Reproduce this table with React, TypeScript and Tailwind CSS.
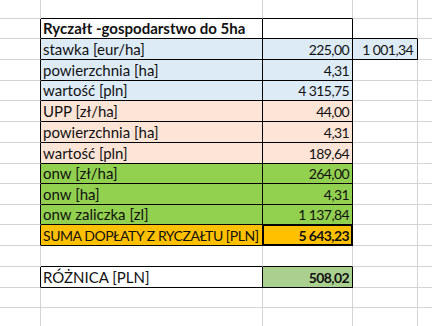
import React from 'react';

type Cell = {
    text?: string;
    cls: string;
    num?: boolean;
    bold?: boolean;
};

const G = 'border-r border-b border-r-[#d4d4d4] border-b-[#d4d4d4]';
const E = 'border-b border-b-[#d4d4d4]';
const grid = (r: 'g' | 'k', b: 'g' | 'k') =>
    `border-r border-b ${r === 'k' ? 'border-r-black' : 'border-r-[#d4d4d4]'} ${b === 'k' ? 'border-b-black' : 'border-b-[#d4d4d4]'}`;

const blue = 'bg-[#ddebf7]';
const peach = 'bg-[#fce4d6]';
const green = 'bg-[#92d050]';
const orange = 'bg-[#ffc000]';

const dataRow = (label: string, value: string, bg: string, d?: Cell): Cell[] => [
    { cls: grid('k', 'g') },
    { text: label, cls: `${grid('k', 'k')} ${bg} pl-[2px]` },
    { text: value, cls: `${grid('k', 'k')} ${bg} pr-[3px]`, num: true },
    d ?? { cls: G },
    { cls: E },
];

const rows: { h: string; cells: Cell[] }[] = [
    { h: 'h-[19px]', cells: [{ cls: G }, { cls: grid('g', 'k') }, { cls: grid('g', 'k') }, { cls: G }, { cls: E }] },
    {
        h: 'h-[20px]',
        cells: [
            { cls: grid('k', 'g') },
            { text: 'Ryczałt -gospodarstwo do 5ha', cls: `${grid('k', 'k')} pl-[2px]`, bold: true },
            { cls: grid('k', 'k') },
            { cls: grid('g', 'k') },
            { cls: E },
        ],
    },
    {
        h: 'h-[21px]',
        cells: dataRow('stawka [eur/ha]', '225,00', blue, {
            text: '1 001,34',
            cls: `${grid('k', 'k')} ${blue} pr-[4px]`,
            num: true,
        }),
    },
    { h: 'h-[21px]', cells: dataRow('powierzchnia [ha]', '4,31', blue) },
    { h: 'h-[20px]', cells: dataRow('wartość [pln]', '4 315,75', blue) },
    { h: 'h-[21px]', cells: dataRow('UPP [zł/ha]', '44,00', peach) },
    { h: 'h-[21px]', cells: dataRow('powierzchnia [ha]', '4,31', peach) },
    { h: 'h-[21px]', cells: dataRow('wartość [pln]', '189,64', peach) },
    { h: 'h-[20px]', cells: dataRow('onw [zł/ha]', '264,00', green) },
    { h: 'h-[21px]', cells: dataRow('onw [ha]', '4,31', green) },
    { h: 'h-[20px]', cells: dataRow('onw zaliczka [zl]', '1 137,84', green) },
    {
        h: 'h-[21px]',
        cells: [
            { cls: grid('k', 'g') },
            {
                text: 'SUMA DOPŁATY Z RYCZAŁTU [PLN]',
                cls: `${grid('k', 'k')} ${orange} pl-[2px] text-[14px] tracking-[-0.45px]`,
            },
            {
                text: '5 643,23',
                cls: `${grid('k', 'k')} ${orange} pr-[3px] shadow-[inset_0_0_0_1px_black]`,
                num: true,
                bold: true,
            },
            { cls: G },
            { cls: E },
        ],
    },
    { h: 'h-[21px]', cells: [{ cls: G }, { cls: grid('g', 'k') }, { cls: grid('g', 'k') }, { cls: G }, { cls: E }] },
    {
        h: 'h-[21px]',
        cells: [
            { cls: grid('k', 'g') },
            { text: 'RÓŻNICA [PLN]', cls: `${grid('k', 'k')} pl-[2px]` },
            { text: '508,02', cls: `${grid('k', 'k')} bg-[#a9d08e] pr-[3px]`, num: true, bold: true },
            { cls: G },
            { cls: E },
        ],
    },
    { h: 'h-[20px]', cells: [{ cls: G }, { cls: G }, { cls: G }, { cls: G }, { cls: E }] },
    { h: 'h-[19px]', cells: [{ cls: G }, { cls: G }, { cls: G }, { cls: G }, { cls: E }] },
];

const widths = ['w-[41px]', 'w-[222px]', 'w-[90px]', 'w-[65px]', 'flex-1'];

export default function App() {
    return (
        <div className="w-[432px] h-[326px] overflow-hidden bg-white text-[#111] text-[15px] leading-[17px] font-['Lato','Liberation_Sans',sans-serif]">
            {rows.map((row, i) => (
                <div key={i} className={`flex ${row.h}`}>
                    {row.cells.map((c, j) => (
                        <div
                            key={j}
                            className={`${widths[j]} ${c.cls} shrink-0 flex items-end pb-[1px] whitespace-nowrap overflow-hidden ${
                                c.num ? 'justify-end text-[14px] tracking-[-0.6px]' : ''
                            } ${c.bold ? 'font-bold' : ''}`}
                        >
                            {c.text}
                        </div>
                    ))}
                </div>
            ))}
        </div>
    );
}
